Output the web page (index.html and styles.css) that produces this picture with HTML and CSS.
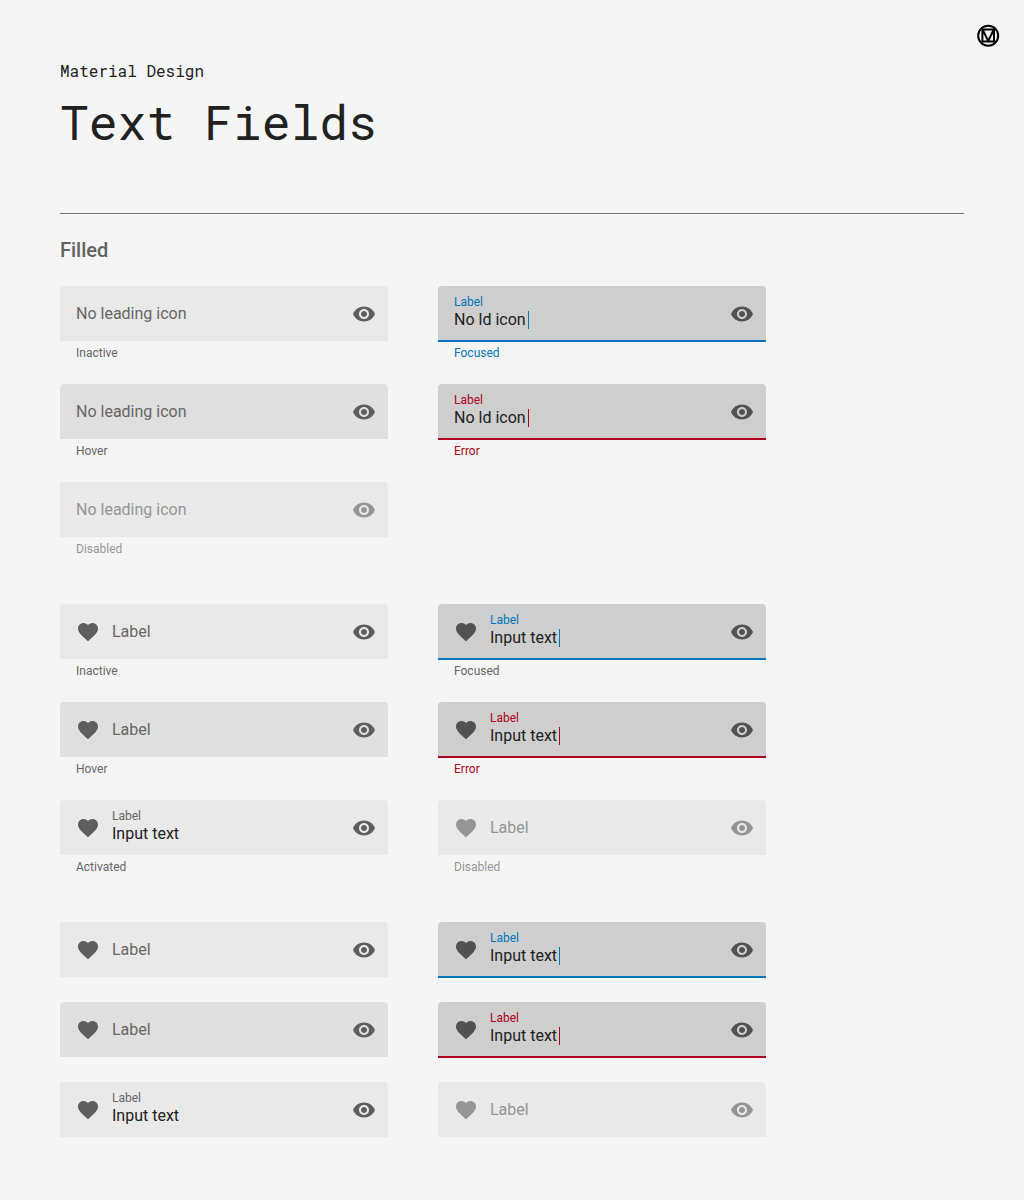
FILE: index.html
```html
<!DOCTYPE html>
<html lang="en">
<head>
<meta charset="utf-8">
<meta name="viewport" content="width=device-width, initial-scale=1">
<title>Text Fields</title>
<link rel="stylesheet" href="styles.css">
</head>
<body>
<svg class="sprite" aria-hidden="true">
  <symbol id="eye" viewBox="0 0 24 24"><path d="M12 4.5C7 4.5 2.73 7.61 1 12c1.73 4.39 6 7.5 11 7.5s9.27-3.11 11-7.5c-1.73-4.39-6-7.5-11-7.5zM12 17c-2.76 0-5-2.24-5-5s2.24-5 5-5 5 2.24 5 5-2.24 5-5 5zm0-8c-1.66 0-3 1.34-3 3s1.34 3 3 3 3-1.34 3-3-1.34-3-3-3z"/></symbol>
  <symbol id="heart" viewBox="0 0 24 24"><path d="M12 21.35l-1.45-1.32C5.4 15.36 2 12.28 2 8.5 2 5.42 4.42 3 7.5 3c1.74 0 3.41.81 4.5 2.09C13.09 3.81 14.76 3 16.5 3 19.58 3 22 5.42 22 8.5c0 3.78-3.4 6.86-8.55 11.54L12 21.35z"/></symbol>
</svg>
<header class="header">
  <div class="titles">
    <p class="eyebrow">Material Design</p>
    <h1 class="title">Text Fields</h1>
  </div>
  <a class="logo" href="#" aria-label="Material Design">
    <svg viewBox="0 0 24 24" fill="none" stroke="currentColor" stroke-width="2"><circle cx="12.200" cy="11.700" r="10"/><path d="M6.400 5.500h11.600v12H6.400zM6.700 5.800L12.200 17L17.700 5.800"/></svg>
  </a>
</header>
<main class="main">
  <h2 class="heading">Filled</h2>
  <div class="groups" id="groups"></div>
</main>
<script src="fields.js"></script>
</body>
</html>
```
FILE: styles.css
```css
* { box-sizing: border-box; }
body {
  margin: 0;
  background: #f5f5f5;
  color: #212121;
  font-family: Roboto, sans-serif;
}
.sprite { display: none; }
.header {
  display: flex;
  justify-content: space-between;
  padding: 24px 24px 63px 60px;
}
.titles { padding-top: 36px; }
.eyebrow {
  margin: 0 0 12px;
  font: 16px/22px "Roboto Mono", "DejaVu Sans Mono", monospace;
}
.title {
  margin: 0;
  font: 48px/56px "Roboto Mono", "DejaVu Sans Mono", monospace;
}
.logo { color: #000; height: 24px; }
.logo svg { display: block; width: 24px; height: 24px; }
.main {
  margin: 0 60px;
  padding: 20px 0 62px;
  border-top: 1px solid #757575;
}
.heading {
  margin: 0 0 20px;
  font-size: 20px;
  line-height: 32px;
  font-weight: 500;
  color: #616161;
}
.groups { display: grid; gap: 47px; }
.group {
  display: grid;
  grid-template-columns: repeat(2, minmax(0, 328px));
  gap: 23px 50px;
}
.group.plain { row-gap: 24px; }
.field {
  display: flex;
  height: 56px;
  padding: 0 12px 0 16px;
  border-radius: 4px 4px 0 0;
  background: #e9e9e9;
  box-shadow: inset 0 -1px #f5f5f5;
  color: #5e5e5e;
}
.hover .field { background: #dfdfdf; }
.focused .field, .error .field { background: #cecece; color: #525252; }
.focused .field { box-shadow: inset 0 -2px #0077bd; }
.error .field { box-shadow: inset 0 -2px #b00020; }
.icon { display: block; width: 24px; height: 24px; fill: currentColor; }
.lead { align-self: center; margin-right: 12px; flex: none; }
.toggle {
  align-self: center;
  padding: 0;
  border: 0;
  background: none;
  color: inherit;
}
.text {
  flex: 1;
  min-width: 0;
  display: grid;
  grid-template-rows: 16px 20px;
  justify-items: start;
  padding-top: 8px;
}
.label { font-size: 12px; line-height: 16px; color: #666; }
.input {
  height: 20px;
  max-width: 100%;
  padding: 0;
  border: 0;
  outline: 0;
  background: none;
  color: #212121;
  font: 16px/20px Roboto, sans-serif;
  field-sizing: content;
}
/* The caret sits directly after the typed text. */
.focused .input, .error .input {
  height: 18px;
  align-self: center;
  padding-right: 2px;
  border-right: 1px solid #0077bd;
}
.error .input { border-color: #b00020; }
/* An empty field shows its label in place of the value. */
.empty .text { grid-template-rows: 55px; padding: 0; align-items: center; }
.empty .label, .empty .input { grid-area: 1 / 1; }
.empty .label { font-size: 16px; line-height: 20px; pointer-events: none; }
.empty .input { width: 100%; }
.helper {
  margin: 3px 16px 0;
  font-size: 12px;
  line-height: 16px;
  color: #666;
}
.focused .label, .tinted .helper { color: #0077bd; }
.error .label, .error .helper { color: #b00020; }
.disabled .field, .disabled .label, .disabled .helper { color: #959595; }
```
FILE: fields.js
```
// Each entry: state classes, label, value, helper text.
const groups = [
  { lead: false, fields: [
    ["empty", "No leading icon", "", "Inactive"],
    ["focused tinted", "Label", "No ld icon", "Focused"],
    ["empty hover", "No leading icon", "", "Hover"],
    ["error", "Label", "No ld icon", "Error"],
    ["empty disabled", "No leading icon", "", "Disabled"]
  ] },
  { lead: true, fields: [
    ["empty", "Label", "", "Inactive"],
    ["focused", "Label", "Input text", "Focused"],
    ["empty hover", "Label", "", "Hover"],
    ["error", "Label", "Input text", "Error"],
    ["", "Label", "Input text", "Activated"],
    ["empty disabled", "Label", "", "Disabled"]
  ] },
  { lead: true, plain: true, fields: [
    ["empty", "Label", "", ""],
    ["focused", "Label", "Input text", ""],
    ["empty hover", "Label", "", ""],
    ["error", "Label", "Input text", ""],
    ["", "Label", "Input text", ""],
    ["empty disabled", "Label", "", ""]
  ] }
];
const icon = (name, extra) => `<svg class="icon ${extra}" aria-hidden="true"><use href="#${name}"/></svg>`;
document.getElementById("groups").innerHTML = groups.map((group, g) =>
  `<div class="group ${group.plain ? "plain" : ""}">${group.fields.map(([state, label, value, helper], i) => {
    const id = `field-${g}-${i}`;
    const disabled = state.includes("disabled") ? "disabled" : "";
    return `<div class="item ${state}">
      <div class="field">
        ${group.lead ? icon("heart", "lead") : ""}
        <div class="text">
          <label class="label" for="${id}">${label}</label>
          <input class="input" id="${id}" type="text" value="${value}" ${disabled}>
        </div>
        <button class="toggle" type="button" aria-label="Toggle visibility" ${disabled}>${icon("eye", "")}</button>
      </div>
      ${helper ? `<p class="helper">${helper}</p>` : ""}
    </div>`;
  }).join("")}</div>`).join("");
```
